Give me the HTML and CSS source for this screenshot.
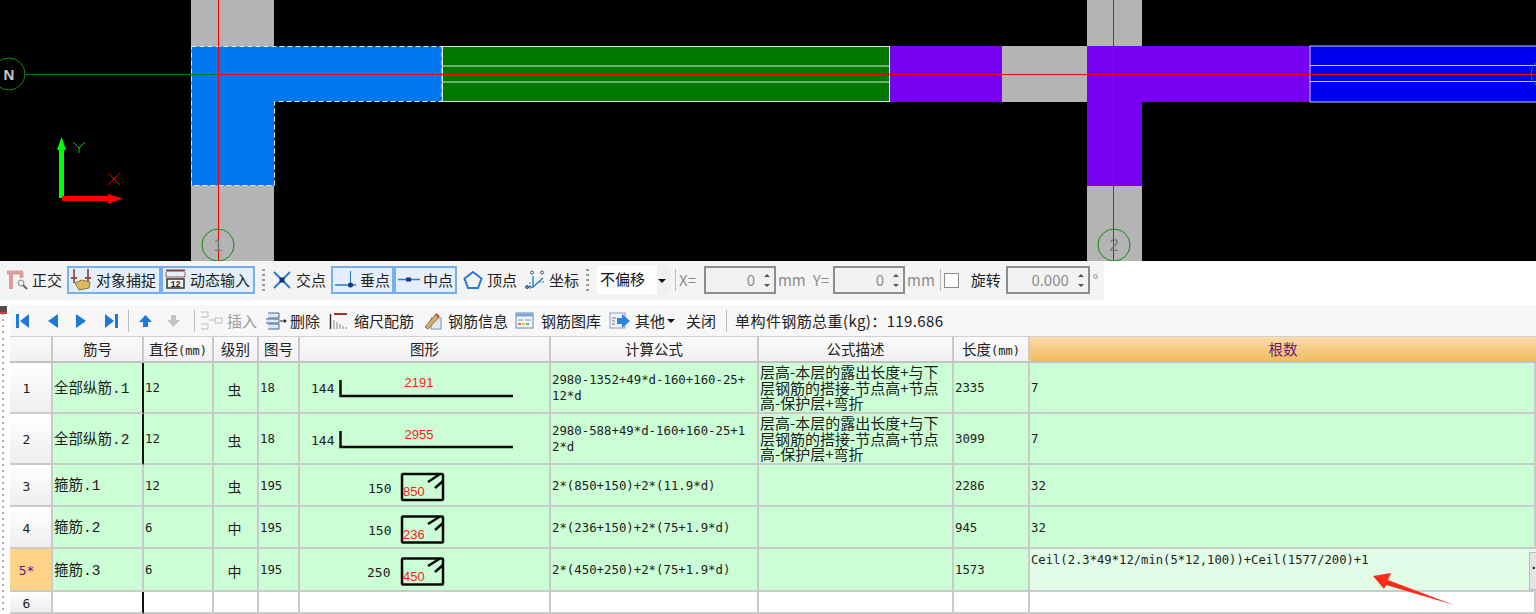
FILE: index.html
```html
<!DOCTYPE html>
<html lang="zh">
<head>
<meta charset="utf-8">
<title>钢筋编辑</title>
<link rel="stylesheet" href="styles.css">
</head>
<body>
<svg class="canvas" viewBox="0 0 1536 261" width="1536" height="261">
  <rect x="191" y="0" width="83" height="261" fill="#b4b4b4"/>
  <rect x="1087" y="0" width="55" height="261" fill="#b4b4b4"/>
  <rect x="1002" y="46" width="85" height="56" fill="#b4b4b4"/>
  <path d="M191.5 46.5H442V101.500H274.500V185.500H191.500Z" fill="#0078f0" stroke="#e8e8e8" stroke-dasharray="5 3"/>
  <rect x="442.500" y="46.500" width="447" height="55" fill="#007800" stroke="#d8e8d8"/>
  <path d="M443 66H890M443 82H890" stroke="#d8e8d8"/>
  <rect x="890" y="46" width="112" height="56" fill="#7800f0"/>
  <path d="M1087 46H1310V102H1142V186H1087Z" fill="#7800f0"/>
  <rect x="1310" y="46" width="230" height="56" fill="#0000f0" stroke="#c8c8f0"/>
  <path d="M1310 65.500H1536M1310 81.500H1536" stroke="#c8c8f0"/>
  <path d="M25 74.500H218" stroke="#008000"/>
  <path d="M218 74.500H1536M218.500 0V261M1113.500 0V261" stroke="#ff0000"/>
  <g fill="none" stroke="#128c12">
    <circle cx="9" cy="74" r="16"/>
    <circle cx="218" cy="245" r="16"/>
    <circle cx="1114" cy="245" r="16"/>
    <circle cx="1547" cy="74" r="16"/>
  </g>
  <text x="9" y="80" class="axis-n">N</text>
  <text x="218" y="251" class="axis-num">1</text>
  <text x="1114" y="251" class="axis-num">2</text>
  <path d="M59 198V150H57L61.500 137L66 150H64V198Z" fill="#00ff00"/>
  <path d="M62 196H108V194L123 198.500L108 204V201H62Z" fill="#ff0000"/>
  <path d="M73 142L79 148L85 142M79 148V153" stroke="#00d000" fill="none"/>
  <path d="M108 173L120 185M120 173L108 185" stroke="#e00000" fill="none"/>
</svg>

<div class="bar bar-snap">
  <div class="tool">
    <svg class="ic" width="22" height="22" viewBox="0 0 22 22"><path d="M1 3.500H17M5 3.500V20M15.500 3.500V9" stroke="#dc9c9c" stroke-width="4" fill="none"/><circle cx="15" cy="14" r="3" fill="#e6ecf0" stroke="#8a8a8a"/><path d="M17 16L21 20" stroke="#666" stroke-width="2"/></svg>
    <span>正交</span>
  </div>
  <div class="btn m5">
    <svg class="ic" width="22" height="22" viewBox="0 0 22 22"><path d="M4 0V14M18 0V14" stroke="#7a3428" stroke-width="1.500"/><path d="M1 9H7M15 9H21" stroke="#9a4a3a" stroke-width="2"/><path d="M5 14L12 11L20 13L19 19L9 21Z" fill="#dcbc5c" stroke="#8a7434"/></svg>
    <span>对象捕捉</span>
  </div>
  <div class="btn">
    <svg class="ic" width="22" height="22" viewBox="0 0 22 22"><path d="M2 1.500H21" stroke="#8a4036" stroke-width="2"/><path d="M2 3V8H21V3" stroke="#a05a50" fill="none"/><rect x="3" y="10" width="17" height="9" fill="#f8f8f8" stroke="#333" stroke-width="1.500"/><text x="11.500" y="18" class="ic-num">12</text></svg>
    <span>动态输入</span>
  </div>
  <div class="grip"></div>
  <div class="tool m7">
    <svg class="ic" width="20" height="20" viewBox="0 0 20 20"><path d="M2 2L18 18M18 2L2 18" stroke="#2a78d0" stroke-width="1.800"/><rect x="7.500" y="7.500" width="5" height="5" fill="#123a80"/></svg>
    <span>交点</span>
  </div>
  <div class="btn m5 narrow">
    <svg class="ic" width="24" height="20" viewBox="0 0 24 20"><path d="M1 15H22" stroke="#2a78d0" stroke-width="1.500"/><path d="M16.500 1V15" stroke="#2a78d0"/><circle cx="16.500" cy="15" r="2.500" fill="#123a80"/></svg>
    <span>垂点</span>
  </div>
  <div class="btn narrow">
    <svg class="ic" width="24" height="20" viewBox="0 0 24 20"><path d="M1 9.500H23" stroke="#2a78d0" stroke-width="1.500"/><rect x="9" y="7.500" width="5" height="4" fill="#123a80"/></svg>
    <span>中点</span>
  </div>
  <div class="tool m6">
    <svg class="ic" width="20" height="20" viewBox="0 0 20 20"><path d="M10 2L18.500 8.500L15 18H5L1.500 8.500Z" fill="none" stroke="#2a78d0" stroke-width="2"/></svg>
    <span>顶点</span>
  </div>
  <div class="tool m8">
    <svg class="ic" width="20" height="20" viewBox="0 0 20 20"><path d="M1 17H8V6M8 17L18 8" stroke="#2a7fd0" fill="none" stroke-width="1.400"/><path d="M14 12H19M5 12V19" stroke="#2a7fd0" stroke-dasharray="2 1"/><circle cx="7" cy="2.500" r="1.500" fill="none" stroke="#456"/><circle cx="17" cy="2.500" r="1.500" fill="none" stroke="#456"/><circle cx="2" cy="17" r="1.500" fill="none" stroke="#456"/></svg>
    <span>坐标</span>
  </div>
  <div class="grip"></div>
  <div class="drop m8">不偏移<span class="caret"></span></div>
  <div class="sep sep-a"></div>
  <span class="lbl m3">X=</span>
  <div class="spin m8 w72">0<span class="arrows"><i class="up"></i><i class="down"></i></span></div>
  <span class="lbl m2">mm</span>
  <span class="lbl m7">Y=</span>
  <div class="spin m4 w72">0<span class="arrows"><i class="up"></i><i class="down"></i></span></div>
  <span class="lbl m2">mm</span>
  <div class="sep sep-b"></div>
  <div class="check"></div>
  <span class="m12">旋转</span>
  <div class="spin m5 w84">0.000<span class="arrows"><i class="up"></i><i class="down"></i></span></div>
  <span class="lbl m3">°</span>
</div>

<div class="bar bar-nav">
  <svg class="nav" width="13" height="16" viewBox="0 0 13 16"><path d="M0 1H3V15H0ZM13 1V15L4 8Z" fill="#1f78d8"/></svg>
  <svg class="nav nav-gap" width="11" height="16" viewBox="0 0 11 16"><path d="M11 1V15L1 8Z" fill="#1f78d8"/></svg>
  <svg class="nav nav-gap" width="11" height="16" viewBox="0 0 11 16"><path d="M0 1V15L10 8Z" fill="#1f78d8"/></svg>
  <svg class="nav nav-gap" width="13" height="16" viewBox="0 0 13 16"><path d="M10 1H13V15H10ZM0 1V15L9 8Z" fill="#1f78d8"/></svg>
  <div class="sep sep-n1"></div>
  <svg class="nav m10" width="13" height="14" viewBox="0 0 13 14"><path d="M6.500 1L13 8H9V13H4V8H0Z" fill="#1f78d8"/></svg>
  <svg class="nav nav-gap2" width="13" height="14" viewBox="0 0 13 14"><path d="M6.500 13L13 6H9V1H4V6H0Z" fill="#c4c4c4"/></svg>
  <div class="sep sep-n2"></div>
  <svg class="ic m5" width="23" height="20" viewBox="0 0 23 20"><path d="M1 1H8V6H1M1 13H8V18H1M9 9H14M15 7H22V12H15Z" fill="none" stroke="#bbb"/></svg>
  <span class="off m4">插入</span>
  <svg class="ic m8" width="22" height="20" viewBox="0 0 22 20"><path d="M3 2H14V7H3M1 8H14V12H1M3 13H14V18H3" fill="#dce8f6" stroke="#4a6a90"/><path d="M15 10H21" stroke="#222"/><path d="M19 8L22 10L19 12Z" fill="#222"/></svg>
  <span class="m3">删除</span>
  <svg class="ic m9" width="19" height="20" viewBox="0 0 19 20"><path d="M1.500 3V18" stroke="#333" stroke-width="1.500"/><path d="M5 3H18" stroke="#a03020" stroke-width="2"/><path d="M5 9V18M8 11V18M11 13V18M14 15V18M17 16V18" stroke="#888"/></svg>
  <span class="m6">缩尺配筋</span>
  <svg class="ic m9" width="19" height="20" viewBox="0 0 19 20"><rect x="8" y="7" width="10" height="11" fill="#dfe8f2" stroke="#7a94b0"/><path d="M2 16L13 3L16 6L5 18Z" fill="#d8b060" stroke="#866"/><path d="M13 3L16 6" stroke="#c04030" stroke-width="2"/></svg>
  <span class="m6">钢筋信息</span>
  <svg class="ic m7" width="19" height="18" viewBox="0 0 19 18"><rect x="1" y="1" width="17" height="15" fill="#f2f6fa" stroke="#5f8ab8"/><path d="M1 3H18" stroke="#7fa6d0" stroke-width="3"/><path d="M3 8H8M10 8H16" stroke="#888"/><path d="M3 12H6" stroke="#e07060" stroke-width="2"/><path d="M7 12H10" stroke="#e8c050" stroke-width="2"/><path d="M11 12H14" stroke="#70b870" stroke-width="2"/></svg>
  <span class="m7">钢筋图库</span>
  <svg class="ic m8" width="21" height="20" viewBox="0 0 21 20"><rect x="1" y="2" width="15" height="15" fill="#eef3f8" stroke="#8aa0bc"/><path d="M3 7H7M3 10H6M3 13H6" stroke="#778"/><path d="M8 7H13V3L21 10L13 17V13H8Z" fill="#2f82e0"/></svg>
  <span class="m5">其他</span>
  <span class="caret caret-s"></span>
  <span class="m11">关闭</span>
  <div class="sep sep-n3"></div>
  <span class="total">单构件钢筋总重(kg)：119.686</span>
</div>

<div class="grid-wrap">
  <div class="gutter"></div>
  <table class="sheet">
    <colgroup>
      <col class="c-idx"><col class="c-name"><col class="c-dia"><col class="c-grade"><col class="c-fig"><col class="c-shape"><col class="c-calc"><col class="c-desc"><col class="c-len"><col class="c-num">
    </colgroup>
    <thead>
      <tr class="r-head">
        <th></th><th>筋号</th><th>直径<span class="unit">(mm)</span></th><th>级别</th><th>图号</th><th>图形</th><th>计算公式</th><th>公式描述</th><th>长度<span class="unit">(mm)</span></th><th class="active">根数</th>
      </tr>
    </thead>
    <tbody>
      <tr class="r-tall">
        <td class="idx">1</td><td class="name div">全部纵筋.1</td><td class="mono">12</td><td class="grade">虫</td><td class="mono">18</td>
        <td class="shape"><svg class="draw" width="250" height="49" viewBox="0 0 250 49"><text x="11" y="30" class="d-num">144</text><path d="M40.500 17V33H213" class="d-line"/><text x="119" y="24" class="d-red">2191</text></svg></td>
        <td class="mono calc">2980-1352+49*d-160+160-25+<br>12*d</td>
        <td class="desc">层高-本层的露出长度+与下<br>层钢筋的搭接-节点高+节点<br>高-保护层+弯折</td>
        <td class="mono">2335</td><td class="mono">7</td>
      </tr>
      <tr class="r-tall">
        <td class="idx">2</td><td class="name div">全部纵筋.2</td><td class="mono">12</td><td class="grade">虫</td><td class="mono">18</td>
        <td class="shape"><svg class="draw" width="250" height="49" viewBox="0 0 250 49"><text x="11" y="31" class="d-num">144</text><path d="M40.500 17V33H213" class="d-line"/><text x="119" y="25" class="d-red">2955</text></svg></td>
        <td class="mono calc">2980-588+49*d-160+160-25+1<br>2*d</td>
        <td class="desc">层高-本层的露出长度+与下<br>层钢筋的搭接-节点高+节点<br>高-保护层+弯折</td>
        <td class="mono">3099</td><td class="mono">7</td>
      </tr>
      <tr class="r-mid">
        <td class="idx">3</td><td class="name">箍筋.1</td><td class="mono">12</td><td class="grade">虫</td><td class="mono">195</td>
        <td class="shape"><svg class="draw" width="250" height="40" viewBox="0 0 250 40"><text x="68" y="28" class="d-num">150</text><rect x="102" y="9" width="41" height="26" rx="1" class="d-line"/><path d="M128 17L140 9M135 23L143 16" class="d-line"/><text x="103" y="31" class="d-red d-start">850</text></svg></td>
        <td class="mono">2*(850+150)+2*(11.9*d)</td><td></td><td class="mono">2286</td><td class="mono">32</td>
      </tr>
      <tr class="r-mid">
        <td class="idx">4</td><td class="name">箍筋.2</td><td class="mono">6</td><td class="grade">中</td><td class="mono">195</td>
        <td class="shape"><svg class="draw" width="250" height="40" viewBox="0 0 250 40"><text x="68" y="28" class="d-num">150</text><rect x="102" y="9.500" width="41" height="26" rx="1" class="d-line"/><path d="M128 17L140 9.500M135 23L143 16" class="d-line"/><text x="103" y="32" class="d-red d-start">236</text></svg></td>
        <td class="mono">2*(236+150)+2*(75+1.9*d)</td><td></td><td class="mono">945</td><td class="mono">32</td>
      </tr>
      <tr class="r-cur">
        <td class="idx cur">5*</td><td class="name">箍筋.3</td><td class="mono">6</td><td class="grade">中</td><td class="mono">195</td>
        <td class="shape"><svg class="draw" width="250" height="41" viewBox="0 0 250 41"><text x="67" y="28" class="d-num">250</text><rect x="102" y="9.500" width="41" height="26" rx="1" class="d-line"/><path d="M128 17L140 9.500M135 23L143 16" class="d-line"/><text x="103" y="32" class="d-red d-start">450</text></svg></td>
        <td class="mono">2*(450+250)+2*(75+1.9*d)</td><td></td><td class="mono">1573</td>
        <td class="edit"><div class="edit-box"><span class="edit-text">Ceil(2.3*49*12/min(5*12,100))+Ceil(1577/200)+1</span><span class="more">.</span></div></td>
      </tr>
      <tr class="r-empty">
        <td class="idx">6</td><td class="div"></td><td></td><td></td><td></td><td></td><td></td><td></td><td></td><td></td>
      </tr>
    </tbody>
  </table>
</div>

<svg class="pointer" width="90" height="40" viewBox="0 0 90 40"><path d="M2 5L20 2L17 9L83 34L15 14L13 18Z" fill="#ff2a1a"/></svg>
</body>
</html>
```
FILE: styles.css
```css
* { box-sizing: border-box; }
html, body { margin: 0; padding: 0; }
body {
  position: relative;
  width: 1536px;
  height: 614px;
  overflow: hidden;
  background: #fff;
  color: #222;
  font: 15px/20px "Noto Sans CJK SC", "Noto Sans", sans-serif;
}
.canvas { display: block; background: #000; }
.axis-n { font: bold 15px "Liberation Sans", sans-serif; fill: #c8c8c8; text-anchor: middle; }
.axis-num { font: 16px "Liberation Sans", sans-serif; fill: #6d7d80; text-anchor: middle; }

.bar { display: flex; align-items: center; white-space: nowrap; }
.bar-snap { height: 44px; padding: 0 0 6px 6px; background: linear-gradient(#f4f4f4, #f4f4f4) 0 0 / 1104px 39px no-repeat, #fff; }
.bar-nav {
  position: relative;
  height: 31px;
  padding-left: 16px;
  background: linear-gradient(#f7f7f7, #f7f7f7) 10px 0 / 1526px 31px no-repeat, radial-gradient(circle at 3px 3px, #b0b0b0 1px, transparent 1.500px) 0 6px / 9px 6px repeat-y, #fff;
}
.bar-nav::before {
  content: "";
  position: absolute;
  left: 0;
  top: 1px;
  width: 7px;
  height: 6px;
  background: #5c4c4c;
  border-bottom: 2px solid #c04a3a;
}

.tool { display: flex; align-items: center; gap: 4px; }
.ic { flex: none; display: block; }
.ic-num { font: bold 8.500px "Liberation Mono", monospace; fill: #222; text-anchor: middle; }
.btn {
  display: flex; align-items: center; gap: 4px;
  width: 94px; height: 28px; padding-left: 1px;
  background: #e4effb; border: 2px solid #74b1ec;
}
.btn.narrow { width: 63px; padding-left: 1px; gap: 2px; }
.grip { width: 3px; height: 22px; margin-left: 7px; background: repeating-linear-gradient(#9a9a9a 0 2px, transparent 2px 5px); }
.sep { width: 1px; height: 22px; background: #bdbdbd; flex: none; }
.sep-a { margin-left: 5px; }
.sep-b { margin-left: 5px; margin-right: 3px; }
.sep-n1 { margin-left: 10px; }
.sep-n2 { margin-left: 14px; }
.sep-n3 { margin-left: 10px; }

.drop { position: relative; width: 73px; height: 28px; padding: 3px 0 0 3px; background: linear-gradient(90deg, #fff 60px, #f0f0f0 60px); color: #111; }
.caret { display: inline-block; border: 4px solid transparent; border-top-color: #111; border-bottom-width: 0; }
.drop .caret { position: absolute; right: 4px; top: 13px; }
.caret-s { margin-left: 2px; }

.lbl { color: #8c8c8c; }
.spin {
  display: flex; align-items: center; justify-content: flex-end;
  height: 28px; padding-right: 4px;
  background: #f2f2f2; border: 2px solid #8c8c8c; color: #8e8e8e;
}
.w72 { width: 72px; }
.w84 { width: 84px; }
.arrows { display: flex; flex-direction: column; gap: 7px; margin-left: 9px; }
.arrows i { display: block; border: 3.500px solid transparent; }
.arrows .up { border-top-width: 0; border-bottom-color: #555; }
.arrows .down { border-bottom-width: 0; border-top-color: #555; }
.check { width: 15px; height: 15px; background: #fff; border: 1px solid #8c8c8c; }

.m2 { margin-left: 2px; } .m3 { margin-left: 3px; } .m4 { margin-left: 4px; } .m5 { margin-left: 5px; }
.m6 { margin-left: 6px; } .m7 { margin-left: 7px; } .m8 { margin-left: 8px; } .m9 { margin-left: 9px; }
.m10 { margin-left: 10px; } .m11 { margin-left: 11px; } .m12 { margin-left: 12px; }

.nav { flex: none; display: block; }
.nav-gap { margin-left: 18px; }
.nav-gap2 { margin-left: 15px; }
.off { color: #9a9a9a; }
.total { margin-left: 8px; letter-spacing: .4px; }

.grid-wrap { display: flex; }
.gutter { flex: none; width: 10px; height: 278px; background: radial-gradient(circle at 3px 3px, #b0b0b0 1px, transparent 1.500px) 0 0 / 9px 6px repeat-y, #fff; }

.sheet { width: 1526px; flex: none; table-layout: fixed; border-collapse: separate; border-spacing: 0; border-top: 1px solid #d0d0d0; }
.c-idx { width: 43px; } .c-name { width: 91px; } .c-dia { width: 70px; } .c-grade { width: 45px; } .c-fig { width: 41px; }
.c-shape { width: 251px; } .c-calc { width: 208px; } .c-desc { width: 195px; } .c-len { width: 76px; } .c-num { width: 506px; }

.sheet th, .sheet td {
  padding: 2px 1px 0;
  border-right: 2px solid #cacaca;
  border-bottom: 2px solid #cacaca;
  overflow: hidden;
  white-space: nowrap;
}
.sheet th {
  padding: 0;
  font-weight: 400;
  font-size: 14.500px;
  background: linear-gradient(#fafafa, #f1f1f1);
  border-bottom-color: #c2c2c2;
}
.sheet th.active { color: #6a1b72; background: linear-gradient(#fbdcaa, #f2bb5f); border-right: 0; }
.unit { font: 12px "DejaVu Sans Mono", monospace; }
.sheet td { background: #cbfed5; font: 12.350px/15px "DejaVu Sans Mono", monospace; color: #1c1c1c; }

.r-head { height: 26px; }
.r-tall { height: 51px; }
.r-mid { height: 42px; }
.r-cur { height: 43px; }
.r-empty { height: 22px; }
.r-empty td { background: #fff; }

.sheet td.idx { text-align: center; background: linear-gradient(#fff, #eeeeee); font-size: 13px; padding: 2px 8px 0 0; }
.sheet td.cur { background: #ffd28a; color: #5a1a7a; }
.sheet td.name { font: 14.500px/18px "Liberation Mono", "Noto Sans CJK SC", monospace; padding: 2px 0 0 1px; }
.sheet td.div { border-right-color: #111; }
.sheet td.grade { text-align: center; font: 14px/18px "Noto Sans CJK SC", sans-serif; padding: 2px 3px 0 1px; }
.sheet td.calc { line-height: 16px; padding-top: 0; }
.sheet td.desc { font: 15px/15.500px "Noto Sans CJK SC", sans-serif; padding: 0 0 0 1px; overflow: visible; }
.sheet td.shape { padding: 0; }
.draw { display: block; }
.d-num { font: 13px "DejaVu Sans Mono", monospace; fill: #1c1c1c; }
.d-red { font: 13px "Liberation Sans", sans-serif; fill: #ff1a1a; text-anchor: middle; }
.d-start { text-anchor: start; }
.d-line { fill: none; stroke: #0a0a0a; stroke-width: 2.500; }

.sheet td.edit { padding: 0; background: #e1fce7; border-right: 0; vertical-align: top; }
.edit-box { display: flex; justify-content: space-between; height: 41px; padding: 2px 0 0 1px; }
.edit-text { font: 12.200px/18px "DejaVu Sans Mono", monospace; }
.more { width: 7px; height: 38px; margin-top: 1px; background: #e4e4e4; border: 1px solid #bbb; border-right: 0; font-weight: bold; text-align: center; line-height: 24px; }

.pointer { position: absolute; left: 1371px; top: 571px; }
```
